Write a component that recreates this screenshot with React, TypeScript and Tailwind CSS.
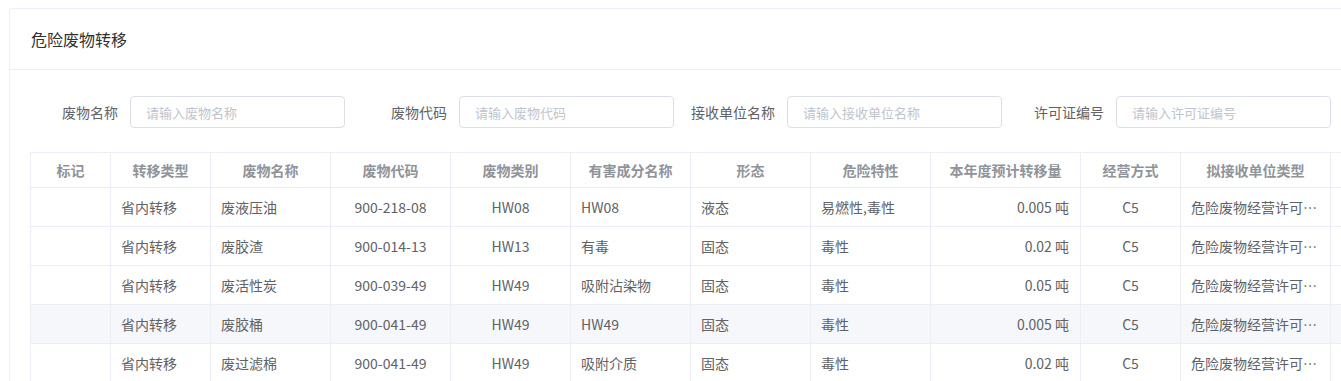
import React from "react";

const rows = [
  { type: "省内转移", name: "废液压油", code: "900-218-08", cat: "HW08", harm: "HW08", form: "液态", risk: "易燃性,毒性", qty: "0.005 吨", mode: "C5", unit: "危险废物经营许可证持有单位" },
  { type: "省内转移", name: "废胶渣", code: "900-014-13", cat: "HW13", harm: "有毒", form: "固态", risk: "毒性", qty: "0.02 吨", mode: "C5", unit: "危险废物经营许可证持有单位" },
  { type: "省内转移", name: "废活性炭", code: "900-039-49", cat: "HW49", harm: "吸附沾染物", form: "固态", risk: "毒性", qty: "0.05 吨", mode: "C5", unit: "危险废物经营许可证持有单位" },
  { type: "省内转移", name: "废胶桶", code: "900-041-49", cat: "HW49", harm: "HW49", form: "固态", risk: "毒性", qty: "0.005 吨", mode: "C5", unit: "危险废物经营许可证持有单位" },
  { type: "省内转移", name: "废过滤棉", code: "900-041-49", cat: "HW49", harm: "吸附介质", form: "固态", risk: "毒性", qty: "0.02 吨", mode: "C5", unit: "危险废物经营许可证持有单位" },
];

const filters = [
  { label: "废物名称", placeholder: "请输入废物名称", gap: "mr-[14px]" },
  { label: "废物代码", placeholder: "请输入废物代码", gap: "mr-[13px]" },
  { label: "接收单位名称", placeholder: "请输入接收单位名称", gap: "mr-[14px]" },
  { label: "许可证编号", placeholder: "请输入许可证编号", gap: "mr-0" },
];

const widths = [80, 100, 120, 120, 120, 120, 120, 120, 150, 100, 150, 120];
const heads = ["标记", "转移类型", "废物名称", "废物代码", "废物类别", "有害成分名称", "形态", "危险特性", "本年度预计转移量", "经营方式", "拟接收单位类型", ""];

export default function App() {
  return (
    <div className="w-[1341px] h-[381px] overflow-hidden bg-white" style={{ fontFamily: '"Noto Sans CJK SC", "Noto Sans", sans-serif' }}>
      <div className="ml-[9px] mt-[8px] w-[1420px] border border-[#ebeef5] rounded-[4px] bg-white">
        <div className="h-[61px] flex items-center pl-[21px] border-b border-[#ebeef5] text-[16px] text-[#303133]">
          危险废物转移
        </div>
        <div className="px-[20px]">
          <div className="flex items-center mt-[26px]">
            {filters.map(f => (
              <div key={f.label} className={"flex items-center " + f.gap}>
                <label className="w-[100px] pr-[12px] text-right text-[14px] text-[#606266]">{f.label}</label>
                <input
                  type="text"
                  placeholder={f.placeholder}
                  className="w-[215px] h-[32px] border border-[#dcdfe6] rounded-[4px] px-[15px] text-[13px] text-[#606266] placeholder:text-[#c0c4cc] outline-none"
                />
              </div>
            ))}
          </div>
          <table className="table-fixed border-collapse mt-[24px] text-[14px]" style={{ width: widths.reduce((a, b) => a + b, 0) }}>
            <colgroup>
              {widths.map((w, i) => <col key={i} style={{ width: w }} />)}
            </colgroup>
            <thead>
              <tr className="h-[35px]">
                {heads.map((h, i) => (
                  <th key={i} className="border border-[#ebeef5] px-[10px] text-center font-bold text-[#909399] whitespace-nowrap overflow-hidden">{h}</th>
                ))}
              </tr>
            </thead>
            <tbody>
              {rows.map((r, i) => (
                <tr key={i} className={"h-[39px] text-[#606266] " + (i == 3 ? "bg-[#f5f7fa]" : "")}>
                  <td className="border border-[#ebeef5] px-[10px]"></td>
                  <td className="border border-[#ebeef5] px-[10px]">{r.type}</td>
                  <td className="border border-[#ebeef5] px-[10px]">{r.name}</td>
                  <td className="border border-[#ebeef5] px-[10px] text-center">{r.code}</td>
                  <td className="border border-[#ebeef5] px-[10px] text-center">{r.cat}</td>
                  <td className="border border-[#ebeef5] px-[10px]">{r.harm}</td>
                  <td className="border border-[#ebeef5] px-[10px]">{r.form}</td>
                  <td className="border border-[#ebeef5] px-[10px]">{r.risk}</td>
                  <td className="border border-[#ebeef5] px-[11px] text-right">{r.qty}</td>
                  <td className="border border-[#ebeef5] px-[10px] text-center">{r.mode}</td>
                  <td className="border border-[#ebeef5] px-[10px] whitespace-nowrap overflow-hidden text-ellipsis">{r.unit}</td>
                  <td className="border border-[#ebeef5] px-[10px]"></td>
                </tr>
              ))}
            </tbody>
          </table>
        </div>
      </div>
    </div>
  );
}
